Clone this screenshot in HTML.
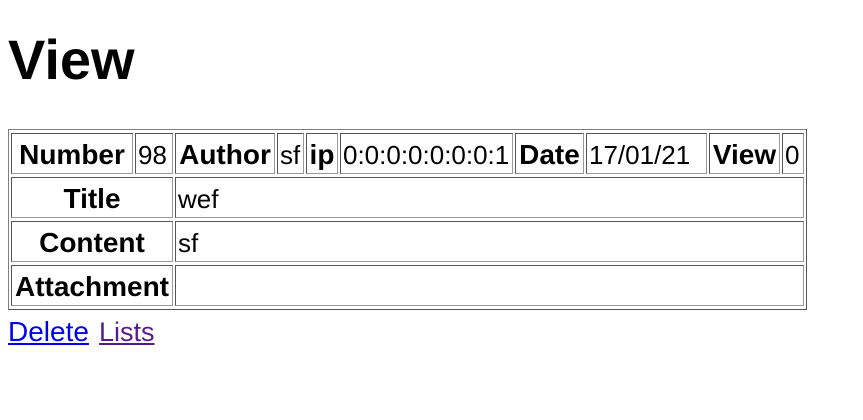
<!DOCTYPE html>
<html><head><meta charset="utf-8"><style>
body{margin:0;background:#fff;font-family:"Liberation Sans",sans-serif;}
h1{position:absolute;left:8px;top:20px;margin:0;font-size:56px;font-weight:bold;line-height:80px;}
.t{position:absolute;left:8px;top:129px;width:797px;height:179px;border:1px solid #808080;border-right-color:#555;border-bottom-color:#555;}
.c{position:absolute;box-sizing:border-box;border:1px solid #555;border-right-color:#999;border-bottom-color:#999;height:41px;display:flex;align-items:center;font-size:26px;white-space:nowrap;padding-left:2px;padding-top:3px;overflow:visible}
.b{font-weight:bold;justify-content:center;padding-left:0;font-size:28px}
a{position:absolute;top:315px;font-size:28px;line-height:34px;}
</style></head><body>
<h1>View</h1>
<div class="t"></div>
<div class="c b" style="left:11px;top:133px;width:122px">Number</div>
<div class="c" style="left:135px;top:133px;width:38px">98</div>
<div class="c b" style="left:175px;top:133px;width:100px">Author</div>
<div class="c" style="left:277px;top:133px;width:27px">sf</div>
<div class="c b" style="left:306px;top:133px;width:32px">ip</div>
<div class="c" style="left:340px;top:133px;width:173px">0:0:0:0:0:0:0:1</div>
<div class="c b" style="left:515px;top:133px;width:69px">Date</div>
<div class="c" style="left:586px;top:133px;width:121px">17/01/21</div>
<div class="c b" style="left:709px;top:133px;width:71px">View</div>
<div class="c" style="left:782px;top:133px;width:22px">0</div>
<div class="c b" style="left:11px;top:177px;width:162px">Title</div>
<div class="c" style="left:175px;top:177px;width:629px">wef</div>
<div class="c b" style="left:11px;top:221px;width:162px">Content</div>
<div class="c" style="left:175px;top:221px;width:629px">sf</div>
<div class="c b" style="left:11px;top:265px;width:162px">Attachment</div>
<div class="c" style="left:175px;top:265px;width:629px"></div>
<a href="#" style="left:8px;color:#0000ee">Delete</a>
<a href="#" style="left:99px;color:#551a8b;font-size:27px">Lists</a>
</body></html>
